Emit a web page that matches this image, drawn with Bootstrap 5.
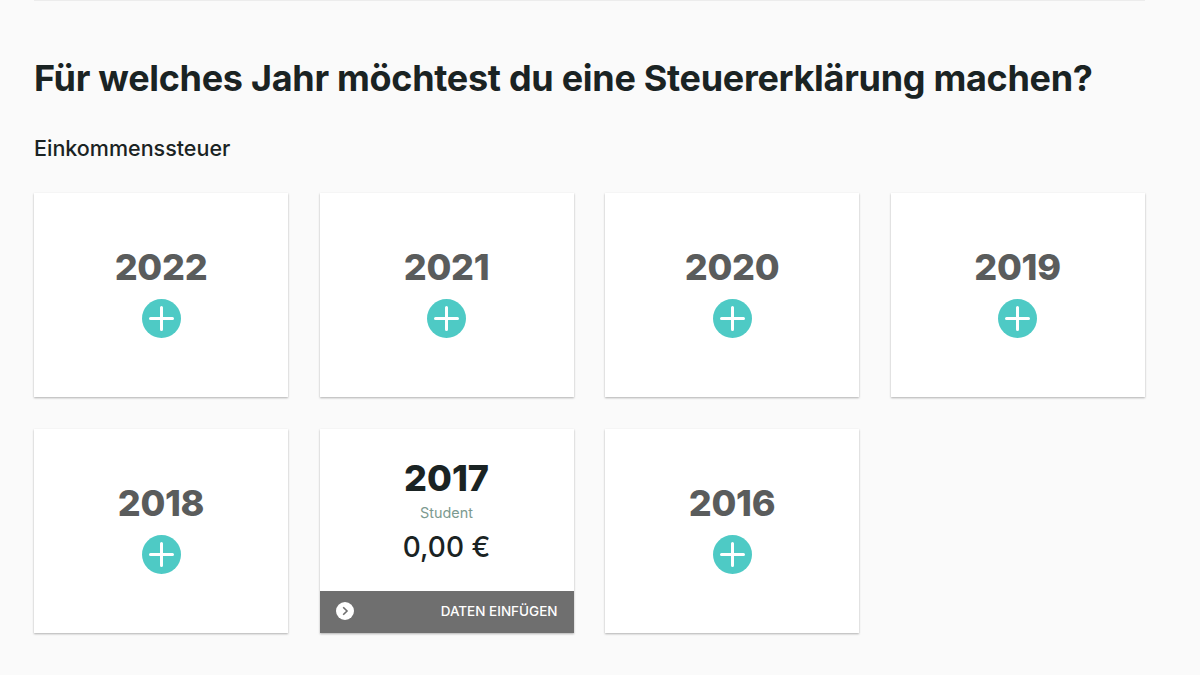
<!DOCTYPE html>
<html lang="de">
<head>
<meta charset="utf-8">
<title>Steuererklärung</title>
<link href="https://cdn.jsdelivr.net/npm/bootstrap@5.3.0/dist/css/bootstrap.min.css" rel="stylesheet">
<style>
html,body{height:675px;overflow:hidden}
body{background:#fafafa;font-family:Inter,"Liberation Sans",sans-serif;color:#1a2323}
.shell{width:1111px;margin-left:34px}
.topline{height:1px;background:#ececec}
.headline{font-size:36px;font-weight:700;line-height:44px;letter-spacing:-.3px;margin:55px 0 0;white-space:nowrap}
.subhead{font-size:21.5px;font-weight:500;line-height:28px;margin:34px 0 0}
.year-grid{display:grid;grid-template-columns:repeat(4,254px);column-gap:31.5px;row-gap:32px;margin-top:31px}
.year-card{height:204px;background:#fff;border:0;border-radius:0;box-shadow:0 1px 2px rgba(0,0,0,.3);overflow:hidden}
.plain-card{padding-bottom:7px}
.year-label{font-size:36px;font-weight:800;line-height:44px;letter-spacing:-.3px;color:#5a5c5c}
.plus-icon{width:39px;height:39px;display:block;margin-top:10.5px}
.active-label{font-size:36px;font-weight:800;line-height:44px;color:#1a2323}
.role{font-size:14.4px;line-height:18px;color:#7c9a90;margin-top:4px}
.amount{font-size:28px;font-weight:500;line-height:34px;margin-top:8px}
.card-foot{height:42px;background:#6f6f6f;color:#fff;font-size:13.5px;font-weight:500;padding:0 16px 2px}
.foot-icon{width:18px;height:18px}
</style>
</head>
<body>
<div class="shell">
  <div class="topline"></div>
  <h1 class="headline">Für welches Jahr möchtest du eine Steuererklärung machen?</h1>
  <h2 class="subhead">Einkommenssteuer</h2>
  <div class="year-grid">
    <div class="card year-card plain-card align-items-center justify-content-center"><div class="year-label">2022</div><svg class="plus-icon" viewBox="0 0 39 39"><circle cx="19.5" cy="19.5" r="19.5" fill="#4ecac5"/><path d="M19.5 8.5v22M8.5 19.5h22" stroke="#fff" stroke-width="3" stroke-linecap="round"/></svg></div>
    <div class="card year-card plain-card align-items-center justify-content-center"><div class="year-label">2021</div><svg class="plus-icon" viewBox="0 0 39 39"><circle cx="19.5" cy="19.5" r="19.5" fill="#4ecac5"/><path d="M19.5 8.5v22M8.5 19.5h22" stroke="#fff" stroke-width="3" stroke-linecap="round"/></svg></div>
    <div class="card year-card plain-card align-items-center justify-content-center"><div class="year-label">2020</div><svg class="plus-icon" viewBox="0 0 39 39"><circle cx="19.5" cy="19.5" r="19.5" fill="#4ecac5"/><path d="M19.5 8.5v22M8.5 19.5h22" stroke="#fff" stroke-width="3" stroke-linecap="round"/></svg></div>
    <div class="card year-card plain-card align-items-center justify-content-center"><div class="year-label">2019</div><svg class="plus-icon" viewBox="0 0 39 39"><circle cx="19.5" cy="19.5" r="19.5" fill="#4ecac5"/><path d="M19.5 8.5v22M8.5 19.5h22" stroke="#fff" stroke-width="3" stroke-linecap="round"/></svg></div>
    <div class="card year-card plain-card align-items-center justify-content-center"><div class="year-label">2018</div><svg class="plus-icon" viewBox="0 0 39 39"><circle cx="19.5" cy="19.5" r="19.5" fill="#4ecac5"/><path d="M19.5 8.5v22M8.5 19.5h22" stroke="#fff" stroke-width="3" stroke-linecap="round"/></svg></div>
    <div class="card year-card">
      <div class="flex-grow-1 d-flex flex-column align-items-center justify-content-center text-center">
        <div class="active-label">2017</div>
        <div class="role">Student</div>
        <div class="amount">0,00 €</div>
      </div>
      <div class="card-foot d-flex align-items-center justify-content-between">
        <svg class="foot-icon" viewBox="0 0 18 18"><circle cx="9" cy="9" r="9" fill="#fff"/><path d="M7.2 5.2 11 9l-3.8 3.8" fill="none" stroke="#6f6f6f" stroke-width="1.6"/></svg>
        <span>DATEN EINFÜGEN</span>
      </div>
    </div>
    <div class="card year-card plain-card align-items-center justify-content-center"><div class="year-label">2016</div><svg class="plus-icon" viewBox="0 0 39 39"><circle cx="19.5" cy="19.5" r="19.5" fill="#4ecac5"/><path d="M19.5 8.5v22M8.5 19.5h22" stroke="#fff" stroke-width="3" stroke-linecap="round"/></svg></div>
  </div>
</div>
<script src="https://cdn.jsdelivr.net/npm/bootstrap@5.3.0/dist/js/bootstrap.bundle.min.js"></script>
</body>
</html>
